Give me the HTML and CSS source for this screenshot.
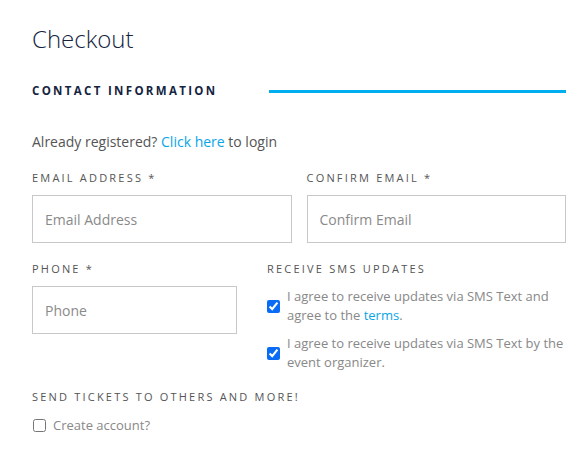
FILE: index.html
```html
<!DOCTYPE html>
<html>
<head>
    <title>Checkout</title>
    <link rel="stylesheet" href="styles.css">
</head>
<body>
    <div class="checkout">
        <h1 class="title">Checkout</h1>

        <div class="section-head">
            <h2>Contact Information</h2>
            <span class="rule"></span>
        </div>

        <p class="login">Already registered? <a href="#">Click here</a> to login</p>

        <div class="row two">
            <div class="field">
                <label class="cap">Email Address *</label>
                <input type="text" placeholder="Email Address">
            </div>
            <div class="field">
                <label class="cap">Confirm Email *</label>
                <input type="text" placeholder="Confirm Email">
            </div>
        </div>

        <div class="row phone-row">
            <div class="field phone">
                <label class="cap">Phone *</label>
                <input type="text" placeholder="Phone">
            </div>
            <div class="field">
                <span class="cap">Receive SMS Updates</span>
                <label class="check"><input type="checkbox" checked> <span>I agree to receive updates via SMS Text and agree to the <a href="#">terms</a>.</span></label>
                <label class="check"><input type="checkbox" checked> <span>I agree to receive updates via SMS Text by the event organizer.</span></label>
            </div>
        </div>

        <div class="field more">
            <span class="cap">Send tickets to others and more!</span>
            <label class="check single"><input type="checkbox"> <span>Create account?</span></label>
        </div>
    </div>
</body>
</html>
```

FILE: styles.css
```css
body {
    margin: 0;
    background: #fff;
    font-family: "Open Sans", "Liberation Sans", sans-serif;
    color: #555;
}

.checkout {
    padding: 24px 16px 0 32px;
}

.title {
    margin: 0;
    font-size: 24px;
    font-weight: 300;
    line-height: 30px;
    color: #15243f;
}

.section-head {
    display: flex;
    align-items: center;
    margin-top: 29px;
}

.section-head h2 {
    margin: 0;
    font-size: 11.5px;
    font-weight: 700;
    letter-spacing: 2.32px;
    text-transform: uppercase;
    color: #15243f;
    line-height: 16px;
}

.section-head .rule {
    flex: 1;
    height: 3px;
    margin-left: 52px;
    background: #00aeef;
}

.login {
    margin: 33px 0 0;
    font-size: 14px;
    line-height: 20px;
}

a {
    color: #0aa5e6;
    text-decoration: none;
}

.row {
    display: grid;
    column-gap: 15px;
}

.row.two {
    grid-template-columns: 1fr 1fr;
    margin-top: 18px;
}

.row.two input[type="text"] {
    height: 48px;
}

.row.phone-row {
    grid-template-columns: 205px 1fr;
    column-gap: 30px;
    margin-top: 18px;
    align-items: start;
}

.row.phone-row .cap {
    margin-bottom: 10px;
}

.row.phone-row .phone .cap {
    margin-bottom: 9px;
}

.row.phone-row .phone input[type="text"] {
    height: 48px;
}

.field {
    display: flex;
    flex-direction: column;
}

.cap {
    display: block;
    font-size: 11px;
    letter-spacing: 2.2px;
    text-transform: uppercase;
    line-height: 16px;
    color: #555;
    margin-bottom: 9px;
}

.field input[type="text"] {
    box-sizing: border-box;
    height: 47px;
    border: 1px solid #c8c8c8;
    border-radius: 0;
    padding: 0 12px;
    font-family: inherit;
    font-size: 14px;
    color: #555;
}

.field input::placeholder {
    color: #8a8a8a;
}

.check {
    display: flex;
    align-items: center;
    font-size: 13px;
    line-height: 19px;
    color: #888;
    margin-bottom: 9px;
}

.check input {
    margin: 0 7px 0 0;
    width: 13px;
    height: 13px;
    flex: none;
    accent-color: #0a6cf5;
}

.more {
    margin-top: 8px;
}

.more .cap {
    margin-bottom: 11px;
}

.check.single input {
    margin-left: 1px;
}
```
